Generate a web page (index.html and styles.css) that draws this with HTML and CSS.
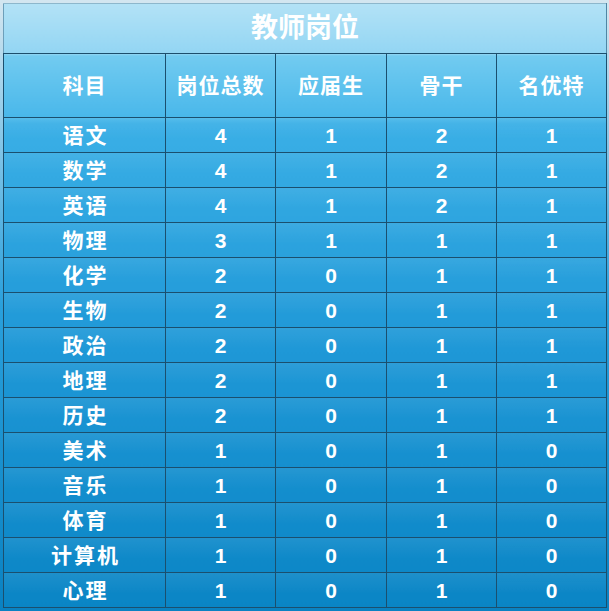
FILE: index.html
```html
<!DOCTYPE html>
<html lang="zh-CN">
<head>
<meta charset="utf-8">
<title>教师岗位</title>
<link rel="stylesheet" href="styles.css">
</head>
<body>
<table class="posts">
  <colgroup>
    <col class="c-subject"><col class="c-num"><col class="c-num2"><col class="c-num"><col class="c-num">
  </colgroup>
  <thead>
    <tr class="title-row"><th colspan="5">教师岗位</th></tr>
    <tr class="head-row"><th>科目</th><th>岗位总数</th><th>应届生</th><th>骨干</th><th>名优特</th></tr>
  </thead>
  <tbody>
    <tr><th>语文</th><td>4</td><td>1</td><td>2</td><td>1</td></tr>
    <tr><th>数学</th><td>4</td><td>1</td><td>2</td><td>1</td></tr>
    <tr><th>英语</th><td>4</td><td>1</td><td>2</td><td>1</td></tr>
    <tr><th>物理</th><td>3</td><td>1</td><td>1</td><td>1</td></tr>
    <tr><th>化学</th><td>2</td><td>0</td><td>1</td><td>1</td></tr>
    <tr><th>生物</th><td>2</td><td>0</td><td>1</td><td>1</td></tr>
    <tr><th>政治</th><td>2</td><td>0</td><td>1</td><td>1</td></tr>
    <tr><th>地理</th><td>2</td><td>0</td><td>1</td><td>1</td></tr>
    <tr><th>历史</th><td>2</td><td>0</td><td>1</td><td>1</td></tr>
    <tr><th>美术</th><td>1</td><td>0</td><td>1</td><td>0</td></tr>
    <tr><th>音乐</th><td>1</td><td>0</td><td>1</td><td>0</td></tr>
    <tr><th>体育</th><td>1</td><td>0</td><td>1</td><td>0</td></tr>
    <tr><th>计算机</th><td>1</td><td>0</td><td>1</td><td>0</td></tr>
    <tr><th>心理</th><td>1</td><td>0</td><td>1</td><td>0</td></tr>
  </tbody>
</table>
</body>
</html>
```

FILE: styles.css
```css
html {
  background: linear-gradient(#d3e6f0 0, #d3e6f0 3px, #2aa0dc 50%, #0a82c2 100%);
  height: 100%;
}
body {
  margin: 0;
  padding: 3px 0 0 3px;
  font-family: "Liberation Sans", "Noto Sans CJK SC", sans-serif;
  color: #fff;
}
.posts {
  border-collapse: collapse;
  table-layout: fixed;
  width: 604px;
  background: linear-gradient(#b3e2f6 0px, #92d5f3 51px, #72cbf0 52px, #48b7ea 115px, #3aafe6 120px, #1f98d7 340px, #0a85c5 605px);
  border-top: 1px solid #8db7cc;
}
.c-subject { width: 162px; }
.c-num { width: 110px; }
.c-num2 { width: 111px; }
.posts th, .posts td {
  border: 1px solid #1b4f6e;
  text-align: center;
  padding: 0;
  font-weight: bold;
  line-height: 1;
}
.title-row th {
  height: 49px;
  font-size: 27px;
  border-bottom: 1px solid #1c4e6c;
  border-top-color: #8db7cc;
  border-left-color: #6d9fba;
  border-right-color: #4f86a4;
}
.head-row th {
  height: 63px;
  font-size: 21px;
  letter-spacing: 1px;
}
tbody tr {
  background: linear-gradient(rgba(255,255,255,0.07), rgba(255,255,255,0) 60%);
}
tbody th, tbody td {
  height: 35px;
  padding-top: 3px;
  box-sizing: border-box;
}
tbody th {
  font-size: 21px;
  letter-spacing: 2px;
  text-indent: 2px;
}
tbody td {
  font-size: 21px;
}
```
